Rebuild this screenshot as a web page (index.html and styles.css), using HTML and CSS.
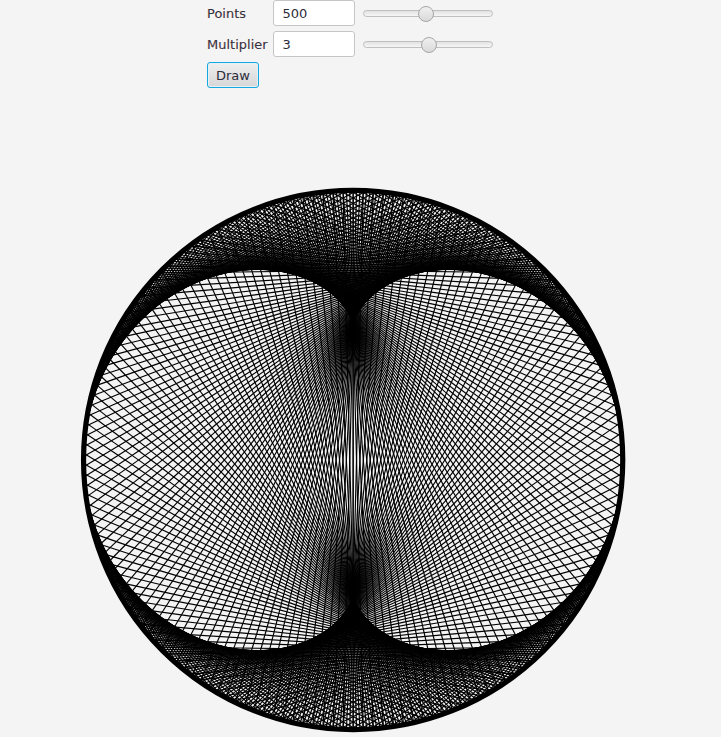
FILE: index.html
```html
<!DOCTYPE html>
<html lang="en">
<head>
<meta charset="utf-8">
<title>Times Table</title>
<link rel="stylesheet" href="styles.css">
</head>
<body>
<main class="app">
  <form class="controls">
    <div class="row">
      <label class="label" for="points">Points</label>
      <input class="field" id="points" type="text" value="500">
      <input class="slider" type="range" min="0" max="1000" step="1" value="482" aria-label="Points slider">
    </div>
    <div class="row">
      <label class="label" for="multiplier">Multiplier</label>
      <input class="field" id="multiplier" type="text" value="3">
      <input class="slider" type="range" min="0" max="1000" step="1" value="509" aria-label="Multiplier slider">
    </div>
    <button class="draw" type="button">Draw</button>
  </form>
  <canvas class="plot" id="plot" width="721" height="649"></canvas>
</main>
<script src="script.js"></script>
</body>
</html>
```
FILE: styles.css
```css
* {
  box-sizing: border-box;
}

html,
body {
  margin: 0;
  height: 100%;
  background: #f4f4f4;
}

.app {
  width: 721px;
  height: 737px;
  overflow: hidden;
  font-family: "DejaVu Sans", sans-serif;
  font-size: 13px;
  color: #333;
}

.controls {
  display: flex;
  flex-direction: column;
  align-items: flex-start;
  gap: 5px;
  padding-left: 207px;
  height: 88px;
}

.row {
  display: flex;
  align-items: center;
  height: 26px;
}

.label {
  width: 66px;
  white-space: nowrap;
  color: #33333f;
  text-shadow: -0.4px 0 rgba(230, 0, 0, 0.22);
}

.field {
  width: 82px;
  height: 26px;
  padding: 0 8.5px;
  border: 1px solid #c6c6c6;
  border-radius: 3px;
  background: #fff;
  font: inherit;
  color: #2c2c3a;
  outline: none;
}

.slider {
  -webkit-appearance: none;
  appearance: none;
  width: 130px;
  height: 18px;
  margin: 1px 0 0 8px;
  background: transparent;
}

.slider::-webkit-slider-runnable-track {
  height: 7px;
  border: 1px solid #bfbfbf;
  border-radius: 4px;
  background: linear-gradient(#e2e2e2, #f6f6f6);
}

.slider::-webkit-slider-thumb {
  -webkit-appearance: none;
  width: 16px;
  height: 16px;
  margin-top: -5.5px;
  border: 1px solid #a6a6a6;
  border-radius: 50%;
  background: linear-gradient(#f0f0f0, #d9d9d9);
}

.draw {
  width: 52px;
  height: 26px;
  padding: 0;
  border: 1.5px solid #15a7e0;
  border-radius: 3px;
  box-shadow: inset 0 0 0 1px #e4f1f7;
  background: linear-gradient(#efefef, #d6d6d6);
  font: inherit;
  color: #2c2c3a;
}

.plot {
  display: block;
}
```
FILE: script.js
```js
(function () {
  var ctx = document.getElementById('plot').getContext('2d');
  var cx = 353.15, cy = 460 - 88, r = 269.6;
  var n = 500, k = 3;

  ctx.strokeStyle = '#000';
  ctx.lineWidth = 1.15;
  for (var i = 0; i < n; i++) {
    var a = 2 * Math.PI * i / n;
    var b = 2 * Math.PI * ((i * k) % n) / n;
    ctx.beginPath();
    ctx.moveTo(cx + r * Math.cos(a), cy + r * Math.sin(a));
    ctx.lineTo(cx + r * Math.cos(b), cy + r * Math.sin(b));
    ctx.stroke();
  }

  ctx.lineWidth = 5.2;
  ctx.beginPath();
  ctx.arc(cx, cy, r, 0, 2 * Math.PI);
  ctx.stroke();
})();
```
